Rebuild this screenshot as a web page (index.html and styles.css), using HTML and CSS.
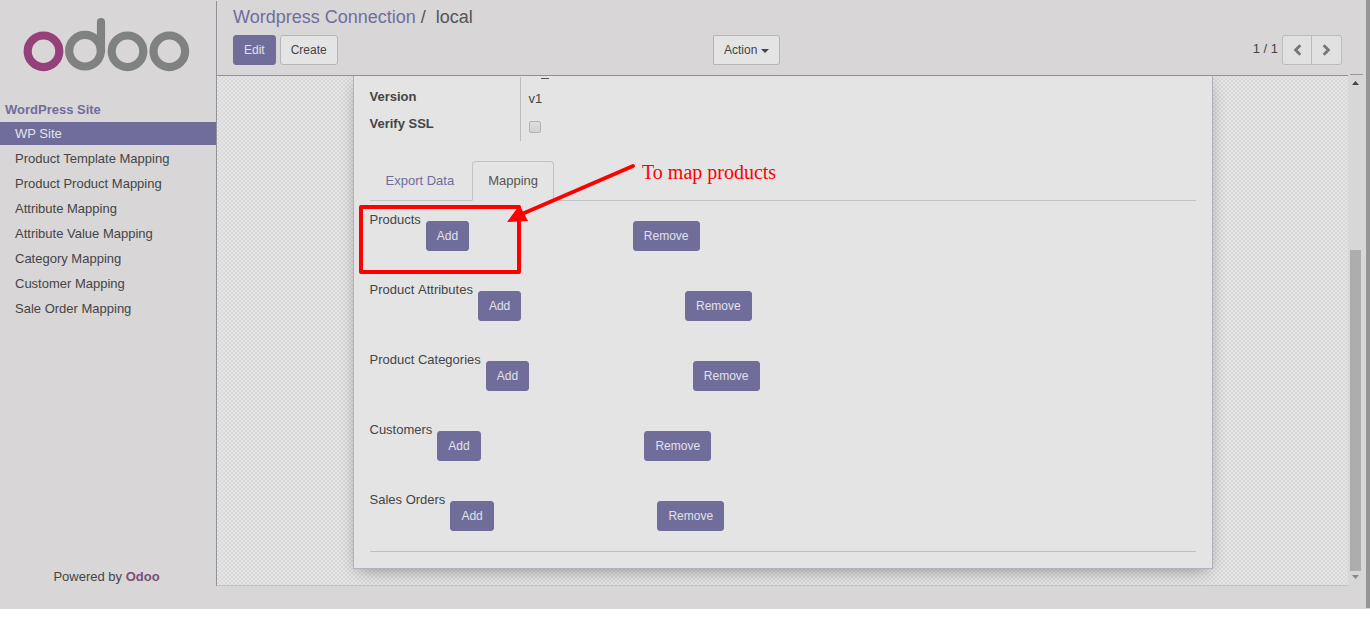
FILE: index.html
```
<!DOCTYPE html>
<html lang="en">
<head>
<meta charset="utf-8">
<title>Wordpress Connection / local</title>
<link rel="stylesheet" href="styles.css">
</head>
<body>
<div class="app">
  <aside class="sidebar">
    <svg class="logo" width="168" height="56" viewBox="0 0 168 56" fill="none" stroke-width="8.2">
      <circle cx="20.5" cy="33.3" r="15.8" stroke="#953f7b"/>
      <g stroke="#7f8280">
        <circle cx="62" cy="32.7" r="15.8"/>
        <path d="M78 33V4.2" stroke-linecap="round"/>
        <circle cx="104.5" cy="33.3" r="15.8"/>
        <circle cx="146.3" cy="33.3" r="15.8"/>
      </g>
    </svg>
    <div class="menu-title">WordPress Site</div>
    <nav class="menu">
      <a class="menu-item active">WP Site</a>
      <a class="menu-item">Product Template Mapping</a>
      <a class="menu-item">Product Product Mapping</a>
      <a class="menu-item">Attribute Mapping</a>
      <a class="menu-item">Attribute Value Mapping</a>
      <a class="menu-item">Category Mapping</a>
      <a class="menu-item">Customer Mapping</a>
      <a class="menu-item">Sale Order Mapping</a>
    </nav>
    <div class="powered">Powered by <b>Odoo</b></div>
  </aside>
  <main class="main">
    <header class="control">
      <div class="crumbs"><a>Wordpress Connection</a> / &nbsp;local</div>
      <div class="toolbar">
        <div class="tools-left"><button class="btn primary">Edit</button><button class="btn">Create</button></div>
        <button class="btn action">Action <i class="caret"></i></button>
        <div class="pager">
          <span>1 / 1</span>
          <div class="pager-buttons">
            <button><svg width="9" height="12" viewBox="0 0 9 12"><path d="M7.3 1.3L2.6 6L7.3 10.7" fill="none" stroke="#777" stroke-width="2.8"/></svg></button>
            <button><svg width="9" height="12" viewBox="0 0 9 12"><path d="M1.7 1.3L6.4 6L1.7 10.7" fill="none" stroke="#777" stroke-width="2.8"/></svg></button>
          </div>
        </div>
      </div>
    </header>
    <div class="body">
      <div class="canvas">
        <section class="sheet">
          <div class="fields">
            <div class="labels"><b>Version</b><b>Verify SSL</b></div>
            <div class="values"><i class="cut"></i><span class="version">v1</span><i class="checkbox"></i></div>
          </div>
          <div class="tabs"><a class="tab">Export Data</a><a class="tab current">Mapping</a></div>
          <div class="rows">
            <div class="row"><span>Products</span><button class="btn primary">Add</button><button class="btn primary remove">Remove</button></div>
            <div class="row"><span class="spaced">Product Attributes</span><button class="btn primary">Add</button><button class="btn primary remove">Remove</button></div>
            <div class="row"><span>Product Categories</span><button class="btn primary">Add</button><button class="btn primary remove">Remove</button></div>
            <div class="row"><span>Customers</span><button class="btn primary">Add</button><button class="btn primary remove">Remove</button></div>
            <div class="row"><span>Sales Orders</span><button class="btn primary">Add</button><button class="btn primary remove">Remove</button></div>
          </div>
        </section>
      </div>
      <div class="scrollbar">
        <i class="arrow-up"></i>
        <i class="thumb"></i>
        <i class="arrow-down"></i>
      </div>
    </div>
  </main>
  <div class="edge"></div>
</div>
<svg class="callout" width="1370" height="624" viewBox="0 0 1370 624">
  <rect x="361" y="207" width="158" height="65" fill="none" stroke="#f00" stroke-width="4" stroke-linejoin="round"/>
  <path d="M633 166L522 214" stroke="#f00" stroke-width="4" stroke-linecap="round"/>
  <path d="M507 222L519.5 205L528 221Z" fill="#f00"/>
</svg>
<div class="note">To map products</div>
</body>
</html>
```
FILE: styles.css
```
* { box-sizing: border-box; }
body {
  margin: 0;
  background: #fff;
  font: 13px/18px "Liberation Sans", Arial, sans-serif;
  color: #454545;
}
.app {
  display: flex;
  height: 609px;
  background: #d8d6d7;
}
.sidebar {
  display: flex;
  flex-direction: column;
  width: 217px;
  height: 585px;
  margin-top: 1px;
  border-right: 1px solid #92929a;
}
.logo { margin: 17px 0 0 23px; flex: none; }
.menu-title {
  margin-top: 27px;
  padding-left: 5px;
  height: 21px;
  font-weight: bold;
  color: #706d9e;
}
.menu { display: flex; flex-direction: column; gap: 2px; }
.menu-item { height: 23px; line-height: 23px; padding-left: 15px; }
.menu-item.active { background: #706d9b; color: #e4e3ea; }
.powered { margin-top: auto; padding-right: 3px; height: 18px; text-align: center; }
.powered b { color: #7b4f73; }
.main { flex: 0 0 1146px; height: 586px; display: flex; flex-direction: column; }
.control { height: 76px; border-bottom: 1px solid #929093; padding: 6px 21px 0 16px; }
.crumbs { font-size: 18px; line-height: 22px; color: #555; }
.crumbs a { color: #706d9e; }
.toolbar { display: grid; grid-template-columns: 480px auto 1fr; margin-top: 7px; }
.tools-left { display: flex; gap: 4px; }
.btn {
  height: 30px;
  padding: 0 10px;
  border: 1px solid #b6b5b6;
  border-radius: 3px;
  background: #e4e4e4;
  color: #454545;
  font: 12px/18px "Liberation Sans", Arial, sans-serif;
}
.btn.primary { background: #706d9b; border-color: #706d9b; color: #e2e1ea; }
.btn.action { border-radius: 0 3px 3px 0; }
.caret {
  display: inline-block;
  border: 4px solid transparent;
  border-top-color: #454545;
  border-bottom: 0;
  vertical-align: 1px;
}
.pager { display: flex; justify-content: flex-end; gap: 4px; }
.pager span { line-height: 28px; }
.pager-buttons { display: flex; border: 1px solid #bbb; border-radius: 3px; background: #e1e1e1; height: 30px; }
.pager-buttons button { width: 28px; padding: 0; border: 0; background: none; display: flex; align-items: center; justify-content: center; }
.pager-buttons button + button { width: 30px; border-left: 1px solid #bbb; }
.body { flex: 1; display: flex; min-height: 0; }
.canvas {
  width: 1131px;
  overflow: hidden;
  border-bottom: 1px solid #c3c2c4;
  background: repeating-conic-gradient(#d8d8d8 0 25%, #e5e5e5 0 50%) 0 0 / 4px 4px;
}
.sheet {
  width: 860px;
  height: 494px;
  margin-left: 136px;
  margin-top: -1px;
  padding: 1px 16px 0 15.5px;
  border: 1px solid #b2b2be;
  background: #e4e4e4;
  box-shadow: 0 5px 16px -5px rgba(0, 0, 0, .4);
}
.fields { display: flex; height: 64px; }
.labels { width: 150px; display: flex; flex-direction: column; gap: 9px; padding-top: 11px; }
.values { border-left: 1px solid #bdbdbd; padding-left: 8px; display: flex; flex-direction: column; align-items: flex-start; }
.cut { flex: none; width: 8px; height: 1px; margin: 1px 0 0 12px; background: #555; }
.version { margin-top: 11px; }
.checkbox {
  flex: none;
  width: 12px;
  height: 12px;
  margin-top: 13px;
  border: 1px solid #b3b3b3;
  border-radius: 2px;
  background: linear-gradient(#dedede, #d2d2d2);
}
.tabs { display: flex; height: 40px; margin-top: 20px; border-bottom: 1px solid #c3c3c6; gap: 2px; }
.tab { padding: 10px 15px; border: 1px solid transparent; height: 40px; color: #706d9e; }
.tab.current { color: #555; border-color: #c3c3c6; border-bottom-color: #e4e4e4; border-radius: 4px 4px 0 0; background: #e4e4e4; }
.rows { height: 351px; border-bottom: 1px solid #bfbfc1; }
.row { display: flex; height: 70px; padding-top: 10px; }
.row .btn { margin: 10px 0 0 5px; }
.row .btn.remove { margin-left: 163.7px; }
.spaced { word-spacing: .8px; }
.scrollbar {
  display: flex;
  flex-direction: column;
  width: 15px;
  margin-top: -2px;
  padding-left: 2px;
  border-top: 1px solid #9a989b;
  border-image: linear-gradient(90deg, #d8d6d7 3px, #9a989b 3px) 1;
  background: #d7d7d7;
}
.arrow-up, .arrow-down { width: 7px; height: 4px; margin-left: 2px; }
.arrow-up { margin-top: 6px; background: #454545; clip-path: polygon(50% 0, 100% 100%, 0 100%); }
.arrow-down { margin-top: 4px; background: #888; clip-path: polygon(0 0, 100% 0, 50% 100%); }
.thumb { width: 11px; height: 321px; margin-top: 165px; background: #adadad; }
.edge { width: 4px; height: 608px; margin-left: auto; background: #969596; }
.callout { position: absolute; left: 0; top: 0; }
.note { position: absolute; left: 642px; top: 160px; font: 20px/24px "Liberation Serif", serif; color: #f00; }
```
